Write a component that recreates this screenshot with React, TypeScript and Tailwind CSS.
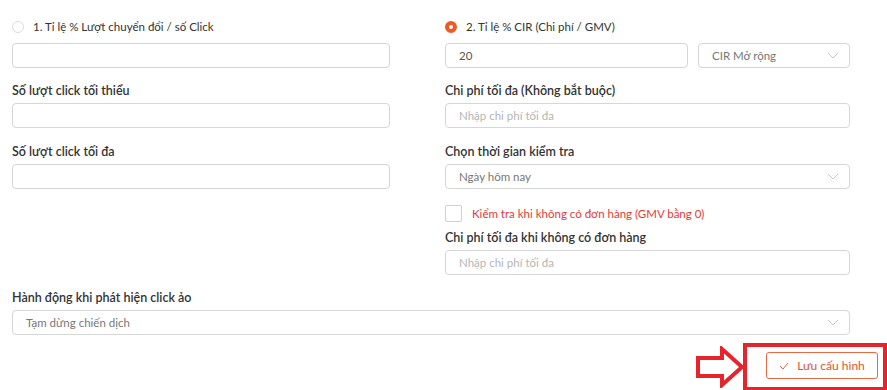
import React from "react";

const font = { fontFamily: "Lato, 'Noto Sans', sans-serif" };

const Chevron = () => (
  <svg width="12" height="7" viewBox="0 0 12 7" fill="none" className="shrink-0">
    <path d="M1 1l5 5 5-5" stroke="#c8c8c8" strokeWidth="1" />
  </svg>
);

const Label = ({ children }: { children: React.ReactNode }) => (
  <div className="h-4 mb-1 text-[12.5px] leading-4 font-semibold text-[#333]">{children}</div>
);

const Input = ({ value, placeholder, className = "" }: { value?: string; placeholder?: string; className?: string }) => (
  <div
    className={`h-[25px] border border-[#d6d6d6] rounded-[4px] flex items-center px-[13px] text-[11.5px] ${className}`}
  >
    {value ? (
      <span className="text-[#555]">{value}</span>
    ) : (
      <span className="text-[#b5b5b5]">{placeholder}</span>
    )}
  </div>
);

const Select = ({ value, className = "" }: { value: string; className?: string }) => (
  <div
    className={`h-[25px] border border-[#d6d6d6] rounded-[4px] flex items-center justify-between pl-[13px] pr-[10px] text-[11.5px] text-[#777] ${className}`}
  >
    <span>{value}</span>
    <Chevron />
  </div>
);

export default function App() {
  return (
    <div className="w-[887px] h-[390px] bg-white overflow-hidden pt-[17px]" style={font}>
      <div className="flex pl-3">
        {/* left column */}
        <div className="w-[378px]">
          <div className="h-5 mb-[6px] flex items-center gap-[9px]">
            <span className="w-3 h-3 rounded-full border border-[#dcdcdc]" />
            <span className="text-[11.5px] text-[#333]">1. Tỉ lệ % Lượt chuyển đổi / số Click</span>
          </div>
          <Input />
          <div className="mt-[15px]">
            <Label>Số lượt click tối thiểu</Label>
            <Input />
          </div>
          <div className="mt-4">
            <Label>Số lượt click tối đa</Label>
            <Input />
          </div>
        </div>

        {/* right column */}
        <div className="w-[405px] ml-[55px]">
          <div className="h-5 mb-[6px] flex items-center gap-[9px]">
            <span className="w-3 h-3 rounded-full border-[4px] border-[#ee5a24] bg-white" />
            <span className="text-[11.5px] text-[#333]">2. Tỉ lệ % CIR (Chi phí / GMV)</span>
          </div>
          <div className="flex gap-[10px]">
            <Input value="20" className="w-[243px]" />
            <Select value="CIR Mở rộng" className="w-[152px]" />
          </div>
          <div className="mt-[15px]">
            <Label>Chi phí tối đa (Không bắt buộc)</Label>
            <Input placeholder="Nhập chi phí tối đa" />
          </div>
          <div className="mt-4">
            <Label>Chọn thời gian kiểm tra</Label>
            <Select value="Ngày hôm nay" />
          </div>
          <div className="mt-4 h-[17px] flex items-center gap-[10px]">
            <span className="w-[17px] h-[17px] border border-[#cfcfcf] rounded-[2px]" />
            <span className="text-[11.5px] text-[#e53935]">Kiểm tra khi không có đơn hàng (GMV bằng 0)</span>
          </div>
          <div className="mt-2">
            <Label>Chi phí tối đa khi không có đơn hàng</Label>
            <Input placeholder="Nhập chi phí tối đa" />
          </div>
        </div>
      </div>

      <div className="mt-[15px] pl-3 w-[850px]">
        <Label>Hành động khi phát hiện click ảo</Label>
        <Select value="Tạm dừng chiến dịch" />
      </div>

      <div className="mt-2 flex justify-end items-center">
        <svg width="50" height="42" viewBox="0 0 50 42" fill="none" className="mr-[-2px]">
          <path
            d="M3 12h24V3l20 18-20 18v-9H3z"
            fill="white"
            stroke="#e5242b"
            strokeWidth="4"
            strokeLinejoin="miter"
          />
        </svg>
        <div className="h-12 w-[144px] border-4 border-[#e5242b] pl-[19px] pt-[5px]">
          <button className="h-[27px] w-[112px] border border-[#e8693f] rounded-[3px] flex items-center justify-center gap-[8px] text-[12px] text-[#e2552a]">
            <svg width="10" height="8" viewBox="0 0 10 8" fill="none">
              <path d="M1 4l3 3 5-6" stroke="#e8693f" strokeWidth="1" />
            </svg>
            <span>Lưu cấu hình</span>
          </button>
        </div>
      </div>
    </div>
  );
}
